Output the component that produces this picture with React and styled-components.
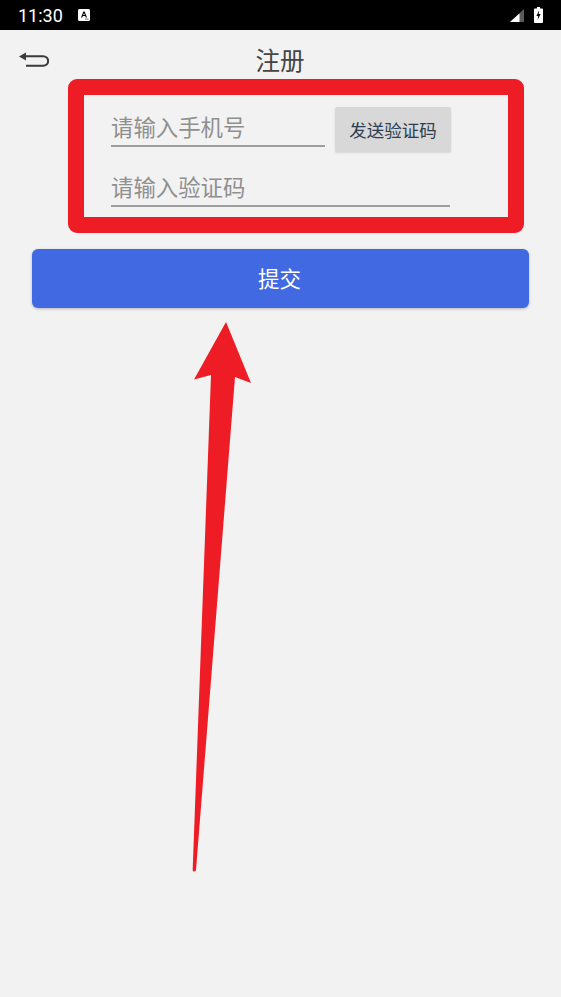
import styled, { createGlobalStyle } from 'styled-components';

const Global = createGlobalStyle`
    html, body {
        margin: 0;
        padding: 0;
        background: #f2f2f2;
    }
    * {
        box-sizing: border-box;
    }
`

const App = () => {
    return (
        <Page>
            <Global />
            <StatusBar>
                <StatusLeft>
                    <Time>11:30</Time>
                    <NoticeIcon viewBox="0 0 12 12">
                        <rect width="12" height="12" rx="1.5" fill="#fff" />
                        <path d="M3 8.5 5.4 2.5h1.2L9 8.5H7.7l-.5-1.4H4.8l-.5 1.4zM5.2 6h1.6L6 3.9z" fill="#000" />
                        <rect x="7" y="9.6" width="3.5" height="1" fill="#777" />
                    </NoticeIcon>
                </StatusLeft>
                <StatusRight>
                    <SignalIcon viewBox="0 0 14 13">
                        <path d="M14 0v13H0z" fill="#5c5c5c" />
                        <path d="M9.5 4.4V13H0z" fill="#fff" />
                    </SignalIcon>
                    <BatteryIcon viewBox="0 0 9 16">
                        <path d="M3 0h3v1.5h2.2c.4 0 .8.4.8.8v13c0 .4-.4.7-.8.7H.8c-.4 0-.8-.3-.8-.7v-13c0-.4.4-.8.8-.8H3z" fill="#fff" />
                        <path d="M5.2 3.2 2.4 9h1.8l-.6 4 3-6H4.700z" fill="#000" />
                    </BatteryIcon>
                </StatusRight>
            </StatusBar>

            <Header>
                <BackIcon viewBox="0 0 30 15">
                    <path d="M0 4.500 7 .5v8z" fill="#3a3a3a" />
                    <path d="M6 4.200h18c6.800 0 6.800 9.600 0 9.600H7" fill="none" stroke="#3a3a3a" strokeWidth="2" />
                </BackIcon>
                <Title>注册</Title>
            </Header>

            <Form>
                <Row>
                    <Field $width="214px">
                        <input placeholder="请输入手机号" />
                    </Field>
                    <CodeButton>发送验证码</CodeButton>
                </Row>
                <Row>
                    <Field $width="339px">
                        <input placeholder="请输入验证码" />
                    </Field>
                </Row>
            </Form>

            <Submit>提交</Submit>

            <RedBox />
            <Arrow viewBox="0 0 561 997">
                <path
                    d="M226 322 251 383 235 377 196 870Q195 872 193.500 871.500 192.500 871 192.700 869L211 375 194 379.500z"
                    fill="#ee1c25"
                />
            </Arrow>
        </Page>
    );
}

const Page = styled.main`
    position: relative;
    width: 561px;
    height: 997px;
    overflow: hidden;
    background: #f2f2f2;
    font-family: "Roboto", "Noto Sans CJK SC", sans-serif;
`

const StatusBar = styled.div`
    height: 30px;
    background: #000;
    color: #fff;
    display: flex;
    justify-content: space-between;
    align-items: center;
    padding: 0 18px;
`

const StatusLeft = styled.div`
    display: flex;
    align-items: center;
    gap: 15px;
`

const StatusRight = styled.div`
    display: flex;
    align-items: center;
    gap: 10px;
`

const Time = styled.span`
    font-size: 18px;
`

const NoticeIcon = styled.svg`
    width: 12px;
    height: 12px;
    margin-top: -1px;
`

const SignalIcon = styled.svg`
    width: 14px;
    height: 13px;
    margin-top: 1px;
`

const BatteryIcon = styled.svg`
    width: 9px;
    height: 16px;
`

const Header = styled.header`
    position: relative;
    height: 59px;
    display: flex;
    justify-content: center;
    align-items: center;
`

const BackIcon = styled.svg`
    position: absolute;
    left: 19px;
    top: 22px;
    width: 30px;
    height: 15px;
`

const Title = styled.h1`
    margin: 0 1px 0 0;
    font-size: 24.500px;
    font-weight: 400;
    color: #444;
    font-family: "Noto Sans CJK SC", sans-serif;
`

const Form = styled.section`
    display: flex;
    flex-direction: column;
    gap: 15px;
    padding: 18px 0 0 111px;
`

const Row = styled.div`
    display: flex;
    align-items: flex-start;
    gap: 10px;
`

const Field = styled.div`
    width: ${props => props.$width};
    height: 40px;
    border-bottom: 2px solid #9e9e9e;

    & input {
        width: 100%;
        height: 38px;
        padding: 0;
        border: none;
        outline: none;
        background: transparent;
        font-family: "Noto Sans CJK SC", sans-serif;
        font-size: 22.400px;
        color: #333;
    }
    & input::placeholder {
        color: #8f8f8f;
        opacity: 1;
    }
`

const CodeButton = styled.button`
    width: 116px;
    height: 45px;
    padding: 0;
    border: none;
    border-radius: 2px;
    background: #d8d8d8;
    box-shadow: 0 1px 2px rgba(0, 0, 0, 0.12);
    color: #2c3e50;
    font-family: "Noto Sans CJK SC", sans-serif;
    font-size: 17.5px;
`

const Submit = styled.button`
    display: block;
    width: 497px;
    height: 59px;
    margin: 42px 0 0 32px;
    padding: 0 2px 2px 0;
    border: none;
    border-radius: 6px;
    background: #4169e1;
    box-shadow: 0 1px 3px rgba(0, 0, 0, 0.25);
    color: #fff;
    font-family: "Noto Sans CJK SC", sans-serif;
    font-size: 21.500px;
`

/* annotation drawn over the form */
const RedBox = styled.div`
    position: absolute;
    left: 68px;
    top: 79px;
    width: 456px;
    height: 154px;
    border: 16px solid #ee1c25;
    border-radius: 9px;
    pointer-events: none;
`

const Arrow = styled.svg`
    position: absolute;
    left: 0;
    top: 0;
    width: 561px;
    height: 997px;
    pointer-events: none;
`

export default App;
